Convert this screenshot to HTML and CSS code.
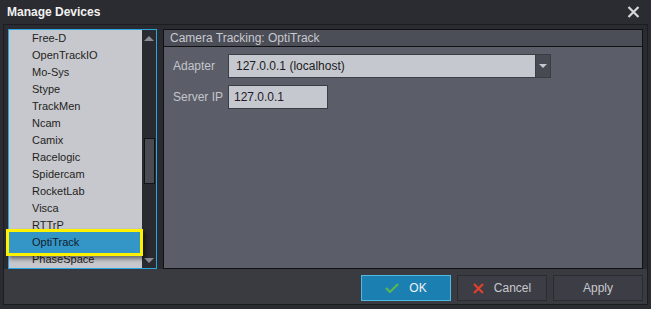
FILE: index.html
```html
<!DOCTYPE html>
<html lang="en">
<head>
    <meta charset="UTF-8">
    <title>Manage Devices</title>
    <link rel="stylesheet" href="styles.css">
</head>
<body>
    <div class="window">
        <div class="titlebar">
            <span>Manage Devices</span>
            <svg class="close" width="13" height="12" viewBox="0 0 13 12">
                <path d="M1.5 1 L11.5 11 M11.5 1 L1.5 11" stroke="#d6d7da" stroke-width="2.2" fill="none"/>
            </svg>
        </div>
        <div class="frame">
            <div class="main">
                <!-- device list -->
                <div class="list">
                    <ul class="items">
                        <li>Free-D</li>
                        <li>OpenTrackIO</li>
                        <li>Mo-Sys</li>
                        <li>Stype</li>
                        <li>TrackMen</li>
                        <li>Ncam</li>
                        <li>Camix</li>
                        <li>Racelogic</li>
                        <li>Spidercam</li>
                        <li>RocketLab</li>
                        <li>Visca</li>
                        <li>RTTrP</li>
                        <li class="selected"><span>OptiTrack</span></li>
                        <li>PhaseSpace</li>
                    </ul>
                    <div class="scroll">
                        <div class="arrow up"></div>
                        <div class="thumb"></div>
                        <div class="arrow down"></div>
                    </div>
                </div>

                <!-- device settings -->
                <div class="panel">
                    <div class="panel-head">Camera Tracking: OptiTrack</div>
                    <div class="panel-body">
                        <label>Adapter</label>
                        <div class="select">
                            <span class="value">127.0.0.1 (localhost)</span>
                            <span class="drop"></span>
                        </div>
                        <label>Server IP</label>
                        <div class="input">127.0.0.1</div>
                    </div>
                </div>
            </div>

            <div class="footer">
                <button class="btn primary">
                    <svg width="14" height="10" viewBox="0 0 14 10">
                        <path d="M1 5 L5 9 L13 1" stroke="#5cb947" stroke-width="2" fill="none"/>
                    </svg>
                    OK
                </button>
                <button class="btn">
                    <svg width="11" height="11" viewBox="0 0 11 11">
                        <path d="M1 1 L10 10 M10 1 L1 10" stroke="#e0402c" stroke-width="2.2" fill="none"/>
                    </svg>
                    Cancel
                </button>
                <button class="btn">Apply</button>
            </div>
        </div>
    </div>
</body>
</html>
```

FILE: styles.css
```css
* { box-sizing: border-box;
}

body {
    margin: 0;
    background: #2b2c31;
    font-family: 'Liberation Sans', Arial, sans-serif;
    font-size: 11px;
}
.window {
    width: 651px;
    height: 309px;
    display: flex;
    flex-direction: column;
}
.titlebar {
    height: 24px;
    display: flex;
    align-items: center;
    justify-content: space-between;
    padding: 0 11px 0 7px;
    color: #f2f2f2;
    font-weight: bold;
    font-size: 12px;
}
.close {
    margin-top: -1px;
}
.frame {
    flex: 1;
    margin: 0 3px 4px 3px;
    border: 1px solid #1c1d21;
    background: #3a3b41;
    display: flex;
    flex-direction: column;
}
.main {
    display: flex;
    gap: 6px;
    padding: 4px 4px 0 4px;
    background: #2a2b30;
}
.list {
    width: 149px;
    height: 240px;
    border: 1px solid #29a6de;
    display: flex;
}
.items {
    flex: 1;
    margin: 0;
    padding: 0;
    list-style: none;
    background: #c7c8cd;
    color: #1f1f22;
}
.items li {
    height: 17px;
    line-height: 17px;
    padding-left: 23px;
}
.items li.selected {
    position: relative;
}
.items li.selected::before {
    content: '';
    position: absolute;
    left: -3px;
    right: -1px;
    top: -5px;
    bottom: -5px;
    border: 3px solid #fff200;
    background: #3396c7;
    box-shadow: 3px 3px 4px rgba(0, 0, 0, 0.45);
}
.items li.selected span {
    position: relative;
    color: #14202a;
}
.scroll {
    width: 14px;
    background: #2a2b30;
    display: flex;
    flex-direction: column;
    align-items: center;
}
.arrow {
    width: 0;
    height: 0;
    border-left: 5px solid transparent;
    border-right: 5px solid transparent;
}
.arrow.up {
    margin-top: 6px;
    border-bottom: 5px solid #8a8c94;
}
.arrow.down {
    margin-top: auto;
    margin-bottom: 5px;
    border-top: 5px solid #8a8c94;
}
.thumb {
    width: 11px;
    height: 46px;
    margin-top: 97px;
    background: #4b4c53;
    border: 1px solid #121315;
}
.panel {
    flex: 1;
    height: 240px;
    border: 1px solid #101113;
    background: #5b5e69;
    display: flex;
    flex-direction: column;
}
.panel-head {
    height: 17px;
    line-height: 16px;
    padding-left: 6px;
    background: #4b4d57;
    border-bottom: 1px solid #101113;
    color: #c8cace;
    font-size: 12px;
}
.panel-body {
    display: grid;
    grid-template-columns: 55px auto;
    row-gap: 7px;
    align-items: center;
    justify-items: start;
    padding: 7px 9px;
}
.panel-body label {
    color: #c3c5cb;
    font-size: 12px;
}
.select {
    width: 323px;
    height: 24px;
    display: flex;
    border: 1px solid #3b3d45;
}
.select .value {
    flex: 1;
    background: #c6c8cf;
    padding-left: 7px;
    line-height: 22px;
    color: #1c1c20;
    font-size: 12px;
}
.select .drop {
    width: 15px;
    background: #474953;
    border-left: 1px solid #3b3d45;
    display: flex;
    align-items: center;
    justify-content: center;
}
.select .drop::after {
    content: '';
    border-left: 4px solid transparent;
    border-right: 4px solid transparent;
    border-top: 4px solid #c6c8cf;
}
.input {
    width: 100px;
    height: 24px;
    border: 1px solid #3b3d45;
    background: #c6c8cf;
    padding-left: 5px;
    line-height: 22px;
    color: #24182a;
    font-size: 12px;
}
.footer {
    display: flex;
    justify-content: flex-end;
    gap: 6px;
    padding: 6px 4px 3px 4px;
}
.btn {
    width: 90px;
    height: 26px;
    display: flex;
    align-items: center;
    justify-content: center;
    gap: 10px;
    background: #3d3e45;
    border: 1px solid #2b2c31;
    color: #c8c9ce;
    font-family: 'Liberation Sans', Arial, sans-serif;
    font-size: 12px;
    padding: 0;
}
.btn.primary {
    background: #1c7fb2;
    border-color: #52b9e6;
    color: #eef2f5;
}
```
